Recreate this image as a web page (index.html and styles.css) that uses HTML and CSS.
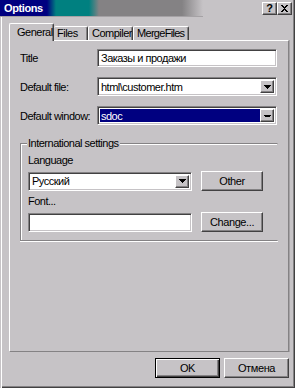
FILE: index.html
```html
<!DOCTYPE html>
<html>
<head>
<meta charset="utf-8">
<link rel="stylesheet" href="styles.css">
</head>
<body>
<div class="window">
  <div class="titlebar">
    <div class="caption">Options</div>
    <div class="caption-buttons">
      <span class="cbtn help">?</span>
      <span class="cbtn close"><svg width="9" height="8" viewBox="0 0 9 8"><path d="M1 0h2v1h1v1h1v-1h1v-1h2v1h-1v1h-1v1h-1v1h1v1h1v1h1v1h-2v-1h-1v-1h-1v1h-1v1h-2v-1h1v-1h1v-1h1v-1h-1v-1h-1v-1h-1z" fill="#000"/></svg></span>
    </div>
  </div>
  <div class="tabs">
    <div class="tab active t-general">General</div>
    <div class="tab t-files">Files</div>
    <div class="tab t-compiler">Compiler</div>
    <div class="tab t-merge">MergeFiles</div>
  </div>
  <div class="panel">
    <div class="row r-text">
      <span class="lbl">Title</span>
      <div class="field text wide"><span class="value">Заказы и продажи</span></div>
    </div>
    <div class="row r-combo">
      <span class="lbl">Default file:</span>
      <div class="field combo wide"><span class="value">html\customer.htm</span><span class="drop"><svg width="7" height="4" viewBox="0 0 7 4"><path d="M0 0h7v1h-1v1h-1v1h-1v1h-1v-1h-1v-1h-1v-1h-1z" fill="#000"/></svg></span></div>
    </div>
    <div class="row r-combo">
      <span class="lbl">Default window:</span>
      <div class="field combo wide"><span class="value selected">sdoc</span><span class="drop"><svg width="7" height="4" viewBox="0 0 7 4"><path d="M0 1h7v1h-1v1h-5v-1h-1z" fill="#000"/></svg></span></div>
    </div>
    <div class="group">
      <span class="group-title">International settings</span>
      <div class="glabel">Language</div>
      <div class="grow">
        <div class="field combo narrow"><span class="value">Русский</span><span class="drop"><svg width="7" height="4" viewBox="0 0 7 4"><path d="M0 0h7v1h-1v1h-1v1h-1v1h-1v-1h-1v-1h-1v-1h-1z" fill="#000"/></svg></span></div>
        <span class="btn side">Other</span>
      </div>
      <div class="glabel">Font...</div>
      <div class="grow">
        <div class="field text narrow"></div>
        <span class="btn side">Change...</span>
      </div>
    </div>
  </div>
  <div class="footer">
    <span class="btn dlg default">OK</span>
    <span class="btn dlg">Отмена</span>
  </div>
</div>
</body>
</html>
```

FILE: styles.css
```css
* { box-sizing: border-box; }
html, body { margin: 0; padding: 0; background: #c6c3c6; }
body {
  font-family: "Liberation Sans", Arial, sans-serif;
  font-size: 11px;
  color: #000;
}
.window {
  width: 295px;
  height: 388px;
  background: #c6c3c6;
  box-shadow: inset 1px 0 0 #c6c3c6, inset 2px 0 0 #fff, inset -1px -1px 0 #424142, inset -2px -2px 0 #848284;
  overflow: hidden;
}
.titlebar {
  display: flex;
  align-items: flex-start;
  height: 17px;
}
.caption {
  width: 203px;
  height: 17px;
  border-bottom: 1px solid #a5a2a5;
  background: linear-gradient(to right, #000080 0, #000080 47px, #008080 56px, #008080 89px, #848284 99px, #848284 182px, #c6c3c6 203px);
  color: #fff;
  font-weight: bold;
  font-size: 11px;
  letter-spacing: -0.4px;
  line-height: 16px;
  padding-left: 4px;
}
.caption-buttons {
  margin-left: auto;
  margin-right: 3px;
  padding-top: 2px;
  display: flex;
}
.cbtn {
  width: 15px;
  height: 13px;
  background: #c6c3c6;
  border-top: 1px solid #fff;
  border-left: 1px solid #fff;
  border-right: 1px solid #424142;
  border-bottom: 1px solid #424142;
  box-shadow: inset -1px -1px 0 #848284;
  display: flex;
  align-items: center;
  justify-content: center;
  font-weight: bold;
  font-size: 11px;
  line-height: 11px;
}
.cbtn svg { display: block; }
.tabs {
  display: flex;
  align-items: flex-end;
  height: 17px;
  margin-top: 6px;
  padding-left: 9px;
}
.tab {
  height: 14px;
  background: #c6c3c6;
  border-top: 1px solid #fff;
  border-left: 1px solid #fff;
  border-right: 1px solid #424142;
  box-shadow: inset -1px 0 0 #848284;
  border-radius: 2px 2px 0 0;
  font-size: 11px;
  letter-spacing: -0.5px;
  line-height: 13px;
  padding-left: 3px;
  white-space: nowrap;
  overflow: hidden;
}
.tab.active {
  height: 18px;
  margin-bottom: -1px;
  position: relative;
  z-index: 1;
  padding-left: 7px;
  line-height: 17px;
}
.t-general { width: 45px; }
.t-files { width: 34px; border-left: none; }
.t-compiler { width: 45px; }
.t-merge { width: 56px; padding-left: 3px; letter-spacing: -0.7px; }
.panel {
  margin-left: 9px;
  width: 280px;
  height: 312px;
  border-top: 1px solid #fff;
  border-left: 1px solid #fff;
  border-right: 1px solid #848284;
  border-bottom: 1px solid #848284;
  box-shadow: 1px 0 0 #a5a2a5;
  padding: 8px 0 0 10px;
}
.row {
  display: flex;
  align-items: center;
  margin-bottom: 10px;
}
.r-text { height: 18px; }
.r-combo { height: 19px; }
.row:nth-child(3) { margin-bottom: 0; }
.lbl {
  width: 77px;
  letter-spacing: -0.5px;
  white-space: nowrap;
}
.field {
  background: #fff;
  border-top: 1px solid #848284;
  border-left: 1px solid #848284;
  border-right: 1px solid #fff;
  border-bottom: 1px solid #fff;
  box-shadow: inset 1px 1px 0 #424142, inset -1px -1px 0 #c6c3c6;
  display: flex;
  align-items: stretch;
  padding: 2px;
}
.field.wide { width: 180px; height: 100%; }
.field.narrow { width: 164px; height: 19px; }
.value {
  flex: 1;
  display: flex;
  align-items: center;
  padding-left: 1px;
  letter-spacing: -0.5px;
  white-space: nowrap;
  overflow: hidden;
}
.value.selected {
  background: #000080;
  color: #fff;
}
.drop {
  width: 14px;
  background: #c6c3c6;
  border-top: 1px solid #fff;
  border-left: 1px solid #fff;
  border-right: 1px solid #424142;
  border-bottom: 1px solid #424142;
  box-shadow: inset -1px -1px 0 #848284;
  display: flex;
  align-items: center;
  justify-content: center;
}
.drop svg { display: block; }
.group {
  margin-top: 18px;
  width: 258px;
  border: 1px solid #848284;
  border-right-color: #c6c3c6;
  box-shadow: 0 1px 0 #fff, inset 1px 1px 0 #fff;
  padding: 0 7px 8px 7px;
}
.group-title {
  display: block;
  width: fit-content;
  margin: -7px 0 0 -1px;
  padding: 0 1px;
  background: #c6c3c6;
  line-height: 13px;
  letter-spacing: -0.5px;
}
.glabel {
  margin-top: 4px;
  line-height: 13px;
  letter-spacing: -0.5px;
}
.grow {
  margin-top: 4px;
  height: 20px;
  display: flex;
  align-items: center;
  gap: 9px;
}
.btn {
  display: flex;
  align-items: center;
  justify-content: center;
  background: #c6c3c6;
  border-top: 1px solid #fff;
  border-left: 1px solid #fff;
  border-right: 1px solid #424142;
  border-bottom: 1px solid #424142;
  box-shadow: inset -1px -1px 0 #848284;
  letter-spacing: -0.4px;
  white-space: nowrap;
}
.btn.side { width: 62px; height: 20px; }
.footer {
  display: flex;
  justify-content: flex-end;
  gap: 4px;
  margin-top: 6px;
  padding-right: 6px;
}
.btn.dlg { width: 65px; height: 20px; }
.btn.default {
  border: 1px solid #000;
  box-shadow: inset 1px 1px 0 #fff, inset -1px -1px 0 #424142, inset -2px -2px 0 #848284;
}
```
